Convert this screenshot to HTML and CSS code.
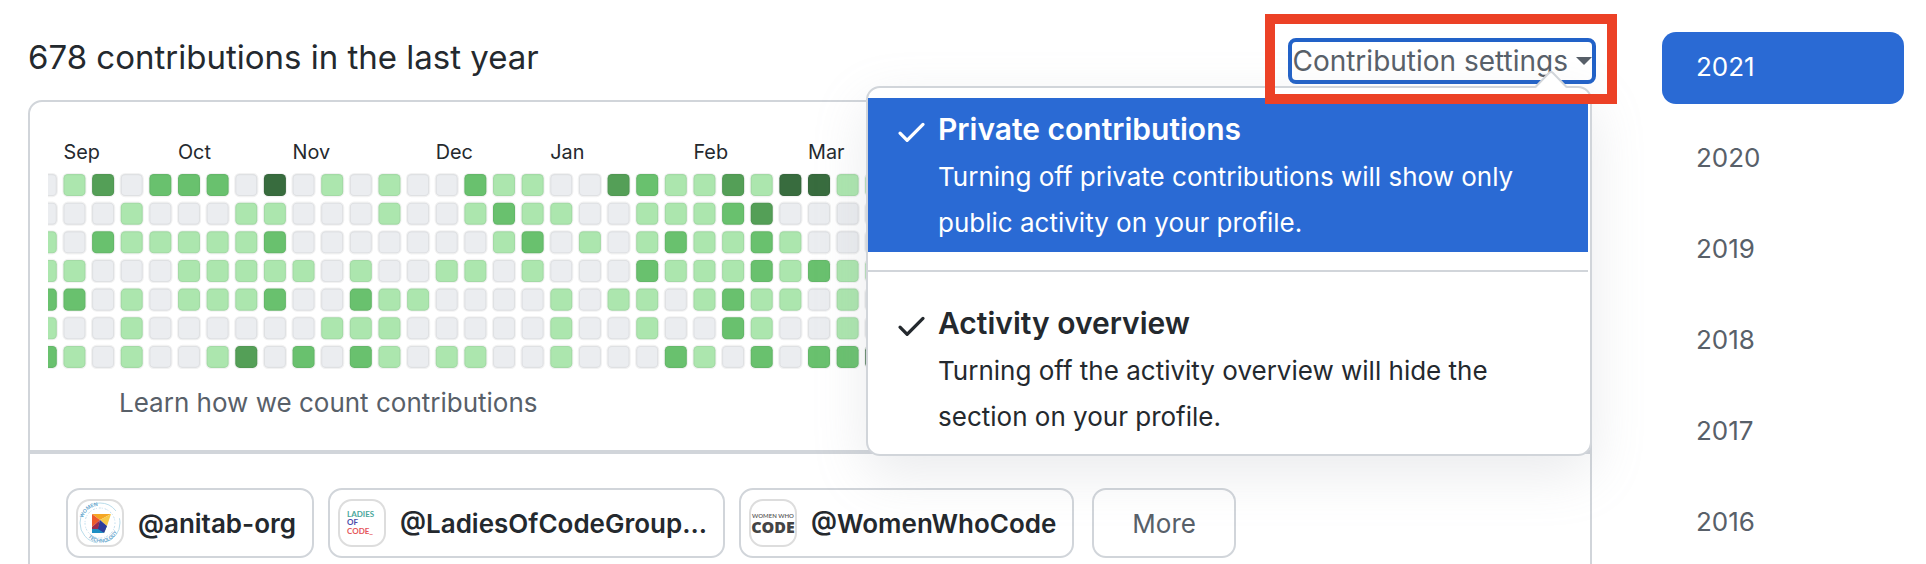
FILE: index.html
```html
<!DOCTYPE html>
<html lang="en">
<head>
<meta charset="utf-8">
<meta name="viewport" content="width=device-width, initial-scale=1">
<title>Contributions</title>
<link rel="stylesheet" href="styles.css">
</head>
<body>
<div class="layout">
  <main class="main">
    <header class="header">
      <h2 class="heading">678 contributions in the last year</h2>
      <div class="settings">
        <button class="settings-button" type="button" aria-haspopup="menu" aria-expanded="true">Contribution settings<span class="caret"></span></button>
        <div class="highlight"></div>
      </div>
      <div class="menu" role="menu">
        <svg class="menu-arrow" viewBox="0 0 32 18" aria-hidden="true"><path d="M0 18V16L14 2q2-2 4 0L32 16v2z" fill="#fff"/><path d="M0 16.500L14 2q2-2 4 0L32 16.500" fill="none" stroke="#d1d5da" stroke-width="2"/></svg>
        <button class="menu-item selected" type="button" role="menuitemcheckbox" aria-checked="true">
          <svg class="check" viewBox="0 0 16 16" aria-hidden="true"><path fill="currentColor" d="M13.780 4.220a.75.75 0 010 1.060l-7.250 7.250a.75.75 0 01-1.060 0L2.220 9.280a.75.75 0 011.060-1.060L6 10.940l6.720-6.720a.75.75 0 011.060 0z"/></svg>
          <span class="menu-text"><strong class="menu-title">Private contributions</strong><span class="menu-desc">Turning off private contributions will show only public activity on your profile.</span></span>
        </button>
        <hr class="divider">
        <button class="menu-item" type="button" role="menuitemcheckbox" aria-checked="true">
          <svg class="check" viewBox="0 0 16 16" aria-hidden="true"><path fill="currentColor" d="M13.780 4.220a.75.75 0 010 1.060l-7.250 7.250a.75.75 0 01-1.060 0L2.220 9.280a.75.75 0 011.060-1.060L6 10.940l6.720-6.720a.75.75 0 011.060 0z"/></svg>
          <span class="menu-text"><strong class="menu-title">Activity overview</strong><span class="menu-desc">Turning off the activity overview will hide the section on your profile.</span></span>
        </button>
      </div>
    </header>

    <section class="card card-top">
      <svg class="calendar" id="calendar" viewBox="0 0 690 112" role="img" aria-label="Contribution calendar"></svg>
      <a class="learn" href="#learn">Learn how we count contributions</a>
    </section>

    <section class="card card-bottom">
      <nav class="orgs" aria-label="Organizations">
        <a class="org" href="#anitab">
          <svg class="avatar" viewBox="0 0 44 44" aria-hidden="true">
            <defs>
              <path id="arc-top" d="M5 17A17.500 17.500 0 0 1 36 12"/>
              <path id="arc-bottom" d="M10 36A18 18 0 0 0 41 24"/>
            </defs>
            <circle cx="22" cy="22" r="20" fill="none" stroke="#b9dcea" stroke-width="1" stroke-dasharray="26 8 40 12"/>
            <circle cx="22" cy="22" r="15" fill="none" stroke="#6aaed6" stroke-width="1" stroke-dasharray="1 2 2 1" opacity=".4"/>
            <text class="ring-text"><textPath href="#arc-top">WOMEN</textPath></text>
            <text class="ring-text"><textPath href="#arc-bottom">TECHNOLOGY</textPath></text>
            <path d="M14 13h19L22 19z" fill="#f5a623"/>
            <path d="M14 13l8 6-8 7z" fill="#ee5a2b"/>
            <path d="M33 13l-4 12-7-6z" fill="#f7c948"/>
            <path d="M29 25l-3 7-2-6z" fill="#3fae7c"/>
            <path d="M22 19l7 6-3 7-7-3z" fill="#2e3d9b"/>
            <path d="M14 26l8-7-2 9-3 4h-3z" fill="#9b2c4f"/>
            <path d="M14 28h6l6 4H14z" fill="#1d8fc4"/>
          </svg>
          <span>@anitab-org</span>
        </a>
        <a class="org" href="#ladiesofcode">
          <svg class="avatar" viewBox="0 0 44 44" aria-hidden="true">
            <g class="ladies-text"><text x="7" y="16" fill="#4aa79b">LADIES</text><text x="7" y="24" fill="#4b4aa8">OF</text><text x="7" y="33" fill="#e5555a">CODE_</text></g>
          </svg>
          <span>@LadiesOfCodeGroup...</span>
        </a>
        <a class="org" href="#womenwhocode">
          <svg class="avatar" viewBox="0 0 44 44" aria-hidden="true">
            <text class="women-text" x="22" y="17" text-anchor="middle">WOMEN WHO</text>
            <text class="code-text" x="22" y="32" text-anchor="middle">CODE</text>
          </svg>
          <span>@WomenWhoCode</span>
        </a>
        <button class="more" type="button">More</button>
      </nav>
    </section>
  </main>

  <nav class="years" aria-label="Contribution years">
    <a class="year current" href="#2021" aria-current="true">2021</a>
    <a class="year" href="#2020">2020</a>
    <a class="year" href="#2019">2019</a>
    <a class="year" href="#2018">2018</a>
    <a class="year" href="#2017">2017</a>
    <a class="year" href="#2016">2016</a>
  </nav>
</div>
<script src="calendar.js"></script>
</body>
</html>
```
FILE: calendar.js
```js
// One string per weekday, one digit (0-4) per week.
const days = [
  "013022204010100211003211314411",
  "000100011000100121100111230000",
  "102111112000000012010121121000",
  "110001111101001101000211121211",
  "220101112002110000101101211010",
  "100100000011100000100100210010",
  "210100130202101100100021020224"
];
const months = [["Sep", 1], ["Oct", 5], ["Nov", 9], ["Dec", 14], ["Jan", 18], ["Feb", 23], ["Mar", 27]];
const calendar = document.getElementById("calendar");

function add(tag, attributes, text) {
  const node = document.createElementNS("http://www.w3.org/2000/svg", tag);
  for (const name in attributes) node.setAttribute(name, attributes[name]);
  if (text) node.textContent = text;
  calendar.appendChild(node);
}

const weekX = (week) => 13 * week - 6;

months.forEach(([name, week]) => add("text", { class: "month", x: weekX(week), y: 13 }, name));
days.forEach((levels, day) => {
  [...levels].forEach((level, week) => {
    add("rect", { class: "day level-" + level, x: weekX(week), y: 20 + 13 * day, width: 10, height: 10, rx: 2 });
  });
});
```
FILE: styles.css
```css
* {
  box-sizing: border-box;
}

body {
  height: 100vh;
  margin: 0;
  overflow: hidden;
  background: #fff;
  color: #24292e;
  font-family: Inter, "Liberation Sans", sans-serif;
  font-size: 26px;
}

a {
  color: inherit;
  text-decoration: none;
}

button {
  padding: 0;
  border: 0;
  background: none;
  color: inherit;
  font: inherit;
}

.layout {
  display: grid;
  grid-template-columns: minmax(0, 1fr) 242px;
  gap: 70px;
  padding: 0 22px 0 28px;
}

.header {
  position: relative;
  display: flex;
  justify-content: space-between;
  height: 100px;
  padding-top: 34px;
}

.heading {
  margin: 0;
  font-size: 33px;
  font-weight: 400;
  line-height: 46px;
}

.settings {
  position: relative;
  padding-top: 8px;
}

.settings-button {
  display: flex;
  align-items: center;
  gap: 8px;
  height: 38px;
  border-radius: 4px;
  outline: 4px solid #2262c8;
  color: #586069;
  font-size: 28px;
}

.caret {
  border: 8px solid transparent;
  border-top-color: #586069;
  border-bottom: 0;
}

.highlight {
  position: absolute;
  z-index: 3;
  top: -20px;
  right: -25px;
  bottom: -4px;
  left: -27px;
  border: 10px solid #ec4126;
  pointer-events: none;
}

.menu {
  position: absolute;
  z-index: 2;
  top: 86px;
  right: 0;
  width: 726px;
  padding: 10px 2px 8px 0;
  border: 2px solid #d1d5da;
  border-radius: 14px;
  background: #fff;
  box-shadow: 0 18px 54px rgba(149, 157, 165, 0.2);
}

.menu-arrow {
  position: absolute;
  top: -17px;
  right: 23px;
  width: 32px;
  height: 18px;
}

.menu-item {
  display: flex;
  gap: 9px;
  width: 100%;
  padding: 8px 40px 6px 26px;
  line-height: 46px;
  text-align: left;
}

.menu-item.selected {
  background: #2a6ad4;
  color: #fff;
}

.check {
  flex: none;
  width: 35px;
  height: 35px;
  margin-top: 8px;
}

.menu-title,
.menu-desc {
  display: block;
}

.menu-title {
  margin-bottom: 2px;
  font-size: 30px;
  font-weight: 600;
}

.menu-desc {
  font-size: 26px;
}

.divider {
  height: 2px;
  margin: 18px 0 20px;
  border: 0;
  background: #d1d5da;
}

.card {
  border: 2px solid #d1d5da;
}

.card-top {
  height: 352px;
  padding: 28px 22px 0 18px;
  border-radius: 14px 14px 0 0;
}

.calendar {
  display: block;
  width: 100%;
}

.month {
  fill: #24292e;
  font-size: 9px;
}

.day {
  stroke: rgba(27, 31, 35, 0.06);
  stroke-width: 1;
}

.level-0 { fill: #ebedf0; }
.level-1 { fill: #ace6ae; }
.level-2 { fill: #69c16e; }
.level-3 { fill: #549f57; }
.level-4 { fill: #386c3e; }

.learn {
  display: inline-block;
  margin: 6px 0 0 71px;
  color: #586069;
  line-height: 40px;
}

.card-bottom {
  height: 140px;
  padding: 34px 36px;
}

.orgs {
  display: flex;
  gap: 14px;
}

.org {
  display: flex;
  align-items: center;
  gap: 14px;
  height: 70px;
  padding: 0 16px 0 8px;
  border: 2px solid #d1d5da;
  border-radius: 14px;
  font-weight: 600;
}

.avatar {
  width: 48px;
  height: 48px;
  border: 2px solid #ddd;
  border-radius: 14px;
  background: #fff;
}

.ring-text {
  fill: #5fa3cc;
  font-size: 5px;
}

.ladies-text {
  font-family: Lato, sans-serif;
  font-size: 8px;
  font-weight: 700;
}

.women-text {
  fill: #555;
  font-family: Lato, sans-serif;
  font-size: 6px;
}

.code-text {
  fill: #444;
  font-family: "Open Sans", sans-serif;
  font-size: 16px;
  font-weight: 800;
}

.more {
  height: 70px;
  margin-left: 4px;
  padding: 0 38px;
  border: 2px solid #d1d5da;
  border-radius: 14px;
  color: #586069;
}

.years {
  display: flex;
  flex-direction: column;
  gap: 19px;
  padding-top: 32px;
}

.year {
  padding: 0 34px 2px;
  border-radius: 14px;
  color: #586069;
  line-height: 70px;
}

.year.current {
  background: #2a6ad4;
  color: #fff;
}
```
